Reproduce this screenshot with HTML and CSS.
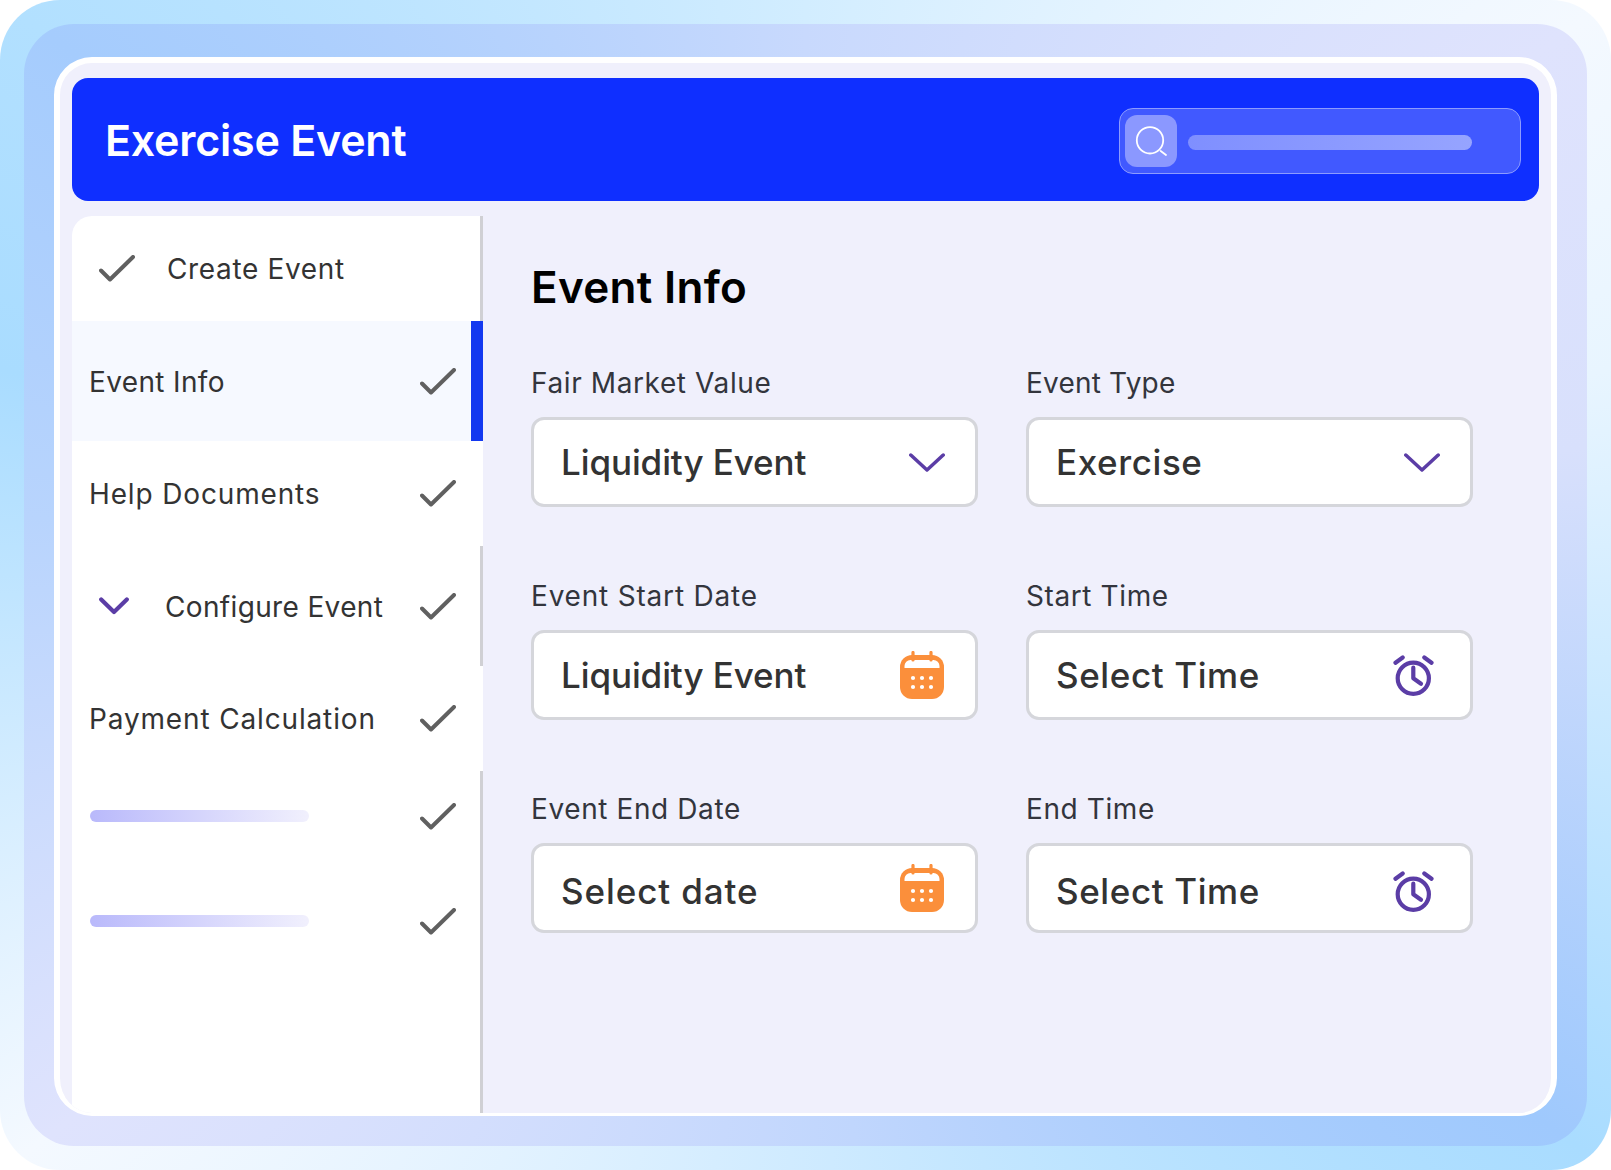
FILE: index.html
```html
<!DOCTYPE html>
<html lang="en">
<head>
<meta charset="utf-8">
<title>Exercise Event</title>
<link rel="stylesheet" href="styles.css">
</head>
<body>
<svg class="defs" width="0" height="0" aria-hidden="true">
  <symbol id="check" viewBox="0 0 36 27"><path d="M2 15.500 L11 24.500 L34 2" fill="none" stroke="#606060" stroke-width="4" stroke-linecap="round" stroke-linejoin="round"/></symbol>
  <symbol id="chev" viewBox="0 0 36 19"><path d="M1.800 2 L18 17 L34.200 2" fill="none" stroke="#5b3da6" stroke-width="3.500" stroke-linecap="round" stroke-linejoin="round"/></symbol>
  <symbol id="navchev" viewBox="0 0 30 18"><path d="M2.200 2.500 L15 15 L27.800 2.500" fill="none" stroke="#5b3da6" stroke-width="4.200" stroke-linecap="round" stroke-linejoin="round"/></symbol>
  <symbol id="cal" viewBox="0 0 44 48">
    <rect x="0" y="4" width="44" height="44" rx="12" fill="#fb8f3b"/>
    <path d="M4.500 17 V15 A6 6 0 0 1 10.500 9 H33.500 A6 6 0 0 1 39.500 15 V17 Z" fill="#fff"/>
    <path d="M13 1.500 V9 M31 1.500 V9" stroke="#fb8f3b" stroke-width="3.200" stroke-linecap="round"/>
    <g fill="#fff"><circle cx="13" cy="27" r="2.100"/><circle cx="22" cy="27" r="2.100"/><circle cx="31" cy="27" r="2.100"/><circle cx="13" cy="36" r="2.100"/><circle cx="22" cy="36" r="2.100"/><circle cx="31" cy="36" r="2.100"/></g>
  </symbol>
  <symbol id="clock" viewBox="0 0 41 44">
    <g fill="none" stroke="#5b3da6" stroke-width="4.200" stroke-linecap="round" stroke-linejoin="round">
      <circle cx="20.300" cy="25.300" r="15.600"/>
      <path d="M20.300 14.700 V25.300 L28 30.700"/>
      <path d="M2.500 9.700 L9.700 4.500 M31.300 4.500 L38.500 9.700"/>
    </g>
  </symbol>
</svg>
<div class="outer">
  <div class="ring">
    <div class="card">
      <header class="topbar">
        <h1 class="title">Exercise Event</h1>
        <div class="search">
          <span class="search-btn">
            <svg class="search-ico" viewBox="0 0 52 52"><circle cx="25" cy="25.300" r="13.200" fill="none" stroke="#fff" stroke-width="1.800"/><path d="M35.700 36 L41 40" stroke="#fff" stroke-width="1.800" stroke-linecap="round"/></svg>
          </span>
          <span class="search-bar"></span>
        </div>
      </header>
      <div class="content">
        <nav class="sidebar">
          <div class="row h105 rule">
            <svg class="check check-lead"><use href="#check"/></svg>
            <span class="row-label">Create Event</span>
          </div>
          <div class="row h120 active">
            <span class="row-label narrow nudge">Event Info</span>
            <svg class="check"><use href="#check"/></svg>
          </div>
          <div class="row h105">
            <span class="row-label wide">Help Documents</span>
            <svg class="check"><use href="#check"/></svg>
          </div>
          <div class="row h120 rule">
            <svg class="nav-chev"><use href="#navchev"/></svg>
            <span class="row-label narrow nudge">Configure Event</span>
            <svg class="check"><use href="#check"/></svg>
          </div>
          <div class="row h105">
            <span class="row-label wide">Payment Calculation</span>
            <svg class="check"><use href="#check"/></svg>
          </div>
          <div class="row h90 rule">
            <span class="row-label"><span class="skeleton"></span></span>
            <svg class="check"><use href="#check"/></svg>
          </div>
          <div class="row h120 rule">
            <span class="row-label"><span class="skeleton"></span></span>
            <svg class="check"><use href="#check"/></svg>
          </div>
          <div class="nav-fill rule"></div>
        </nav>
        <main class="main">
          <h2 class="heading">Event Info</h2>
          <div class="form">
            <div class="field">
              <div class="label">Fair Market Value</div>
              <div class="input"><span class="value tight">Liquidity Event</span><svg class="ico-chev"><use href="#chev"/></svg></div>
            </div>
            <div class="field">
              <div class="label label-narrow">Event Type</div>
              <div class="input"><span class="value">Exercise</span><svg class="ico-chev"><use href="#chev"/></svg></div>
            </div>
            <div class="field">
              <div class="label label-wide">Event Start Date</div>
              <div class="input"><span class="value tight">Liquidity Event</span><svg class="ico-cal"><use href="#cal"/></svg></div>
            </div>
            <div class="field">
              <div class="label">Start Time</div>
              <div class="input"><span class="value">Select Time</span><svg class="ico-clock"><use href="#clock"/></svg></div>
            </div>
            <div class="field">
              <div class="label">Event End Date</div>
              <div class="input"><span class="value low loose">Select date</span><svg class="ico-cal"><use href="#cal"/></svg></div>
            </div>
            <div class="field">
              <div class="label">End Time</div>
              <div class="input"><span class="value low">Select Time</span><svg class="ico-clock low"><use href="#clock"/></svg></div>
            </div>
          </div>
        </main>
      </div>
    </div>
  </div>
</div>
</body>
</html>
```
FILE: styles.css
```css
* { box-sizing: border-box; }
html, body { margin: 0; padding: 0; background: #fff; }
body { font-family: Inter, "Liberation Sans", sans-serif; color: #333; }
.defs { position: absolute; }

.outer {
  width: 1611px; height: 1170px; padding: 24px; border-radius: 60px;
  background: conic-gradient(from 0deg at 50% 50%, #d2edff 0deg, #f4f9ff 54deg, #e8f5ff 75deg, #a9dcff 126deg, #c8e8ff 170deg, #f4f9ff 234deg, #a9dcff 285deg, #b2e0ff 306deg, #d2edff 360deg);
}
.ring {
  height: 100%; padding: 33px 30px 30px; border-radius: 50px;
  background: conic-gradient(from 0deg at 50% 50%, #c8d9fd 0deg, #dfe3fd 54deg, #d8e0fc 80deg, #9fc9fd 126deg, #c0d6fd 175deg, #dfe3fd 234deg, #b8d4fd 275deg, #a5ccfd 306deg, #c8d9fd 360deg);
}
.card {
  height: 100%; display: flex; flex-direction: column; gap: 15px;
  padding: 15px 12px 0; border: solid #fff; border-width: 6px 6px 3px;
  border-radius: 38px; background: #f0f0fc; overflow: hidden;
}

.topbar {
  flex: 0 0 123px; display: flex; align-items: center; justify-content: space-between;
  padding: 0 18px 0 33px; background: #0f2fff; border-radius: 16px;
}
.title { margin: 2px 0 0; font-size: 43px; font-weight: 600; line-height: 1; color: #fff; letter-spacing: -0.24px; }
.search {
  width: 402px; height: 66px; display: flex; align-items: center; gap: 11px; padding: 0 5px;
  margin-top: 2px;
  background: #4159ff; border: 1px solid #8d9cff; border-radius: 14px;
}
.search-btn { width: 52px; height: 52px; flex: none; background: #8b98ff; border-radius: 12px; }
.search-ico { display: block; width: 52px; height: 52px; }
.search-bar { width: 284px; height: 15px; border-radius: 8px; background: linear-gradient(90deg, #7f8fff, #96a4ff); margin-top: 4px; }

.content { flex: 1; display: flex; min-height: 0; }
.sidebar { flex: 0 0 411px; display: flex; flex-direction: column; background: #fff; border-radius: 20px 0 0 0; overflow: hidden; }
.row { display: flex; align-items: center; padding: 0 27px 0 18px; flex: none; }
.h105 { height: 105px; }
.h120 { height: 120px; }
.h90 { height: 90px; }
.rule { box-shadow: inset -3px 0 0 #d0d0d4; }
.active { background: #f6f9ff; box-shadow: inset -12px 0 0 #1338f0; }
.nav-fill { flex: 1; }
.row-label { flex: 1; font-size: 28px; font-weight: 400; color: #333; letter-spacing: 0.65px; white-space: nowrap; margin-left: -1px; }
.narrow { letter-spacing: 0.35px; }
.wide { letter-spacing: 0.85px; }
.nudge { margin-top: 2px; }
.check { flex: none; width: 36px; height: 27px; display: block; }
.check-lead { margin: 0 33px 0 9px; }
.nav-chev { flex: none; width: 30px; height: 18px; margin: 0 37px 0 9px; }
.skeleton { display: block; width: 219px; height: 12px; margin-left: 1px; border-radius: 6px; background: linear-gradient(90deg, #b9b9fb, #f1f0fd); }

.main { flex: 1; padding: 46px 0 0 48px; }
.heading { margin: 0 0 54px; font-size: 44px; line-height: 50px; font-weight: 600; color: #000; letter-spacing: 0.3px; }
.form { display: grid; grid-template-columns: 447px 447px; column-gap: 48px; row-gap: 72px; }
.label { height: 34px; margin-bottom: 17px; font-size: 28px; line-height: 34px; font-weight: 400; color: #33353d; letter-spacing: 0.6px; }
.label-narrow { letter-spacing: 0.2px; }
.label-wide { letter-spacing: 0.8px; }
.input {
  height: 90px; display: flex; align-items: center; justify-content: space-between;
  padding: 0 29px 0 27px; background: #fff; border: 3px solid #d5d6db; border-radius: 13px;
}
.value { font-size: 35px; font-weight: 500; color: #333; letter-spacing: 0.6px; white-space: nowrap; }
.tight { letter-spacing: -0.1px; }
.loose { letter-spacing: 0.9px; }
.low { margin-top: 5px; }
.ico-chev { width: 36px; height: 19px; flex: none; margin-right: 1px; }
.ico-cal { width: 44px; height: 48px; flex: none; margin-right: 2px; }
.ico-clock { width: 41px; height: 44px; flex: none; margin-right: 7px; }
```
